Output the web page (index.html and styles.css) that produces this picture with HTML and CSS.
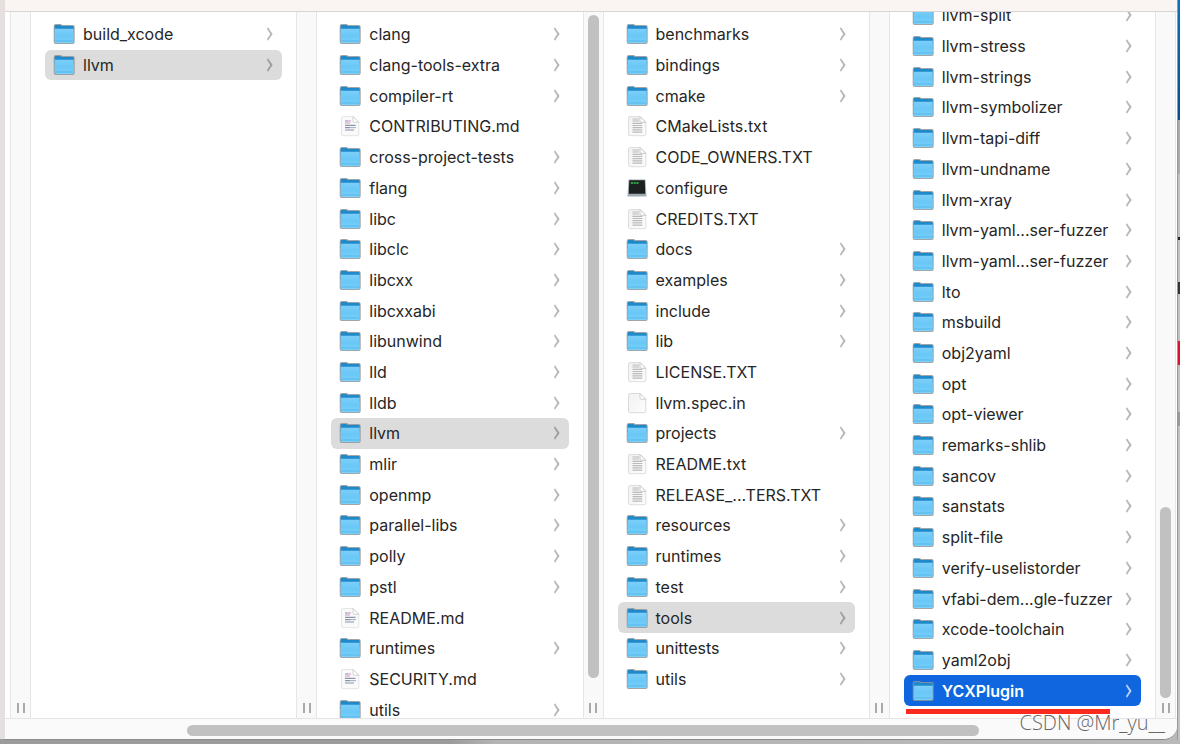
FILE: index.html
```html
<!DOCTYPE html>
<html lang="en">
<head>
<meta charset="utf-8">
<title>llvm – tools</title>
<link rel="stylesheet" href="styles.css">
</head>
<body class="desktop">
<svg class="sprite" aria-hidden="true">
  <defs>
    <linearGradient id="front" x1="0" y1="0" x2="0" y2="1"><stop offset="0" stop-color="#7ccff9"/><stop offset=".5" stop-color="#69c7f6"/><stop offset="1" stop-color="#7bd1fa"/></linearGradient>
    <linearGradient id="sheet" x1="0" y1="0" x2="1" y2="1"><stop offset="0" stop-color="#f1f1f1"/><stop offset="1" stop-color="#fdfdfd"/></linearGradient>
    <symbol id="folder" viewBox="0 0 22 22">
      <path d="M.7 3.200Q.7 1 2.800 1H7.200Q8.400 1 9.200 2H19.800Q21.700 2 21.700 4V19Q21.700 21 19.800 21H2.600Q.7 21 .7 19Z" fill="#8f9599" opacity=".85"/>
      <path d="M1.700 3.300Q1.700 1.900 2.900 1.900H6.900Q8 1.900 8.600 2.900H19.500Q20.700 2.900 20.700 4.200V10H1.700Z" fill="#2089ca"/>
      <path d="M1.700 5.800H20.700V18.500Q20.700 19.900 19.500 19.900H2.800Q1.700 19.900 1.700 18.500Z" fill="url(#front)"/>
      <path d="M2 18H20.400" stroke="#4fb0e3" stroke-width=".8"/>
    </symbol>
    <symbol id="blank" viewBox="0 0 22 22">
      <path d="M2.500 3.200Q2.500 1.500 4.200 1.500H14L19.800 7.300V19Q19.800 20.700 18.100 20.700H4.200Q2.500 20.700 2.500 19Z" fill="url(#sheet)" stroke="#d2d2d2" stroke-width=".8"/>
      <path d="M14 1.500V6Q14 7.300 15.300 7.300H19.800Z" fill="#fff" stroke="#c4c4c4" stroke-width=".8"/>
    </symbol>
    <symbol id="text" viewBox="0 0 22 22">
      <path d="M2.500 3.200Q2.500 1.500 4.200 1.500H14L19.800 7.300V19Q19.800 20.700 18.100 20.700H4.200Q2.500 20.700 2.500 19Z" fill="url(#sheet)" stroke="#d6d6d6" stroke-width=".8"/>
      <path d="M6.500 4H13M6.500 6H13M6.500 8.300H16.300M6.500 10.500H16.300M6.500 12.700H16.300M6.500 14.900H16.300M6.500 17.100H16.300" stroke="#b9b9b9" stroke-width="1.200"/>
      <path d="M14 1.500V6Q14 7.300 15.300 7.300H19.800Z" fill="#fff" stroke="#bdbdbd" stroke-width=".8"/>
    </symbol>
    <symbol id="markdown" viewBox="0 0 22 22">
      <path d="M2.500 3.200Q2.500 1.500 4.200 1.500H14L19.800 7.300V19Q19.800 20.700 18.100 20.700H4.200Q2.500 20.700 2.500 19Z" fill="#fafafa" stroke="#dedede" stroke-width=".8"/>
      <path d="M6 6H9" stroke="#83a7d8" stroke-width="1.200"/><path d="M9 6H12M6 8H11" stroke="#cf94bd" stroke-width="1.200"/>
      <path d="M6 10.300H16.500M6 12.600H11M6 15H15" stroke="#8b93ad" stroke-width="1.200"/><path d="M11 12.600H17" stroke="#a8b6c9" stroke-width="1.200"/>
      <path d="M14 1.500V6Q14 7.300 15.300 7.300H19.800Z" fill="#fff" stroke="#c6c6c6" stroke-width=".8"/>
    </symbol>
    <symbol id="exec" viewBox="0 0 22 22">
      <path d="M2.500 2.500H19.500L20.500 19.500H1.500Z" fill="#9eacb2"/>
      <path d="M3.300 3.300H18.800L19.200 16.700H2.800Z" fill="#1d2021"/>
      <path d="M4.800 6H13" stroke="#35c552" stroke-width="1.600" stroke-dasharray="2.200 .6"/>
    </symbol>
  </defs>
</svg>
<main class="window">
  <header class="titlebar"></header>
  <div class="browser">
    <div class="gutter"><div class="track"></div><span class="grip"></span></div>

    <section class="column">
      <ul class="list">
        <li><a class="row dir" href="#"><svg class="icon"><use href="#folder"/></svg>build_xcode</a></li>
        <li><a class="row dir selected" href="#"><svg class="icon"><use href="#folder"/></svg>llvm</a></li>
      </ul>
      <div class="gutter"><div class="track"></div><span class="grip"></span></div>
    </section>

    <section class="column">
      <ul class="list">
        <li><a class="row dir" href="#"><svg class="icon"><use href="#folder"/></svg>clang</a></li>
        <li><a class="row dir" href="#"><svg class="icon"><use href="#folder"/></svg>clang-tools-extra</a></li>
        <li><a class="row dir" href="#"><svg class="icon"><use href="#folder"/></svg>compiler-rt</a></li>
        <li><a class="row" href="#"><svg class="icon"><use href="#markdown"/></svg>CONTRIBUTING.md</a></li>
        <li><a class="row dir" href="#"><svg class="icon"><use href="#folder"/></svg>cross-project-tests</a></li>
        <li><a class="row dir" href="#"><svg class="icon"><use href="#folder"/></svg>flang</a></li>
        <li><a class="row dir" href="#"><svg class="icon"><use href="#folder"/></svg>libc</a></li>
        <li><a class="row dir" href="#"><svg class="icon"><use href="#folder"/></svg>libclc</a></li>
        <li><a class="row dir" href="#"><svg class="icon"><use href="#folder"/></svg>libcxx</a></li>
        <li><a class="row dir" href="#"><svg class="icon"><use href="#folder"/></svg>libcxxabi</a></li>
        <li><a class="row dir" href="#"><svg class="icon"><use href="#folder"/></svg>libunwind</a></li>
        <li><a class="row dir" href="#"><svg class="icon"><use href="#folder"/></svg>lld</a></li>
        <li><a class="row dir" href="#"><svg class="icon"><use href="#folder"/></svg>lldb</a></li>
        <li><a class="row dir selected" href="#"><svg class="icon"><use href="#folder"/></svg>llvm</a></li>
        <li><a class="row dir" href="#"><svg class="icon"><use href="#folder"/></svg>mlir</a></li>
        <li><a class="row dir" href="#"><svg class="icon"><use href="#folder"/></svg>openmp</a></li>
        <li><a class="row dir" href="#"><svg class="icon"><use href="#folder"/></svg>parallel-libs</a></li>
        <li><a class="row dir" href="#"><svg class="icon"><use href="#folder"/></svg>polly</a></li>
        <li><a class="row dir" href="#"><svg class="icon"><use href="#folder"/></svg>pstl</a></li>
        <li><a class="row" href="#"><svg class="icon"><use href="#markdown"/></svg>README.md</a></li>
        <li><a class="row dir" href="#"><svg class="icon"><use href="#folder"/></svg>runtimes</a></li>
        <li><a class="row" href="#"><svg class="icon"><use href="#markdown"/></svg>SECURITY.md</a></li>
        <li><a class="row dir" href="#"><svg class="icon"><use href="#folder"/></svg>utils</a></li>
      </ul>
      <div class="gutter"><div class="track"><div class="thumb" style="height:97%"></div></div><span class="grip"></span></div>
    </section>

    <section class="column">
      <ul class="list">
        <li><a class="row dir" href="#"><svg class="icon"><use href="#folder"/></svg>benchmarks</a></li>
        <li><a class="row dir" href="#"><svg class="icon"><use href="#folder"/></svg>bindings</a></li>
        <li><a class="row dir" href="#"><svg class="icon"><use href="#folder"/></svg>cmake</a></li>
        <li><a class="row" href="#"><svg class="icon"><use href="#text"/></svg>CMakeLists.txt</a></li>
        <li><a class="row" href="#"><svg class="icon"><use href="#text"/></svg>CODE_OWNERS.TXT</a></li>
        <li><a class="row" href="#"><svg class="icon"><use href="#exec"/></svg>configure</a></li>
        <li><a class="row" href="#"><svg class="icon"><use href="#text"/></svg>CREDITS.TXT</a></li>
        <li><a class="row dir" href="#"><svg class="icon"><use href="#folder"/></svg>docs</a></li>
        <li><a class="row dir" href="#"><svg class="icon"><use href="#folder"/></svg>examples</a></li>
        <li><a class="row dir" href="#"><svg class="icon"><use href="#folder"/></svg>include</a></li>
        <li><a class="row dir" href="#"><svg class="icon"><use href="#folder"/></svg>lib</a></li>
        <li><a class="row" href="#"><svg class="icon"><use href="#text"/></svg>LICENSE.TXT</a></li>
        <li><a class="row" href="#"><svg class="icon"><use href="#blank"/></svg>llvm.spec.in</a></li>
        <li><a class="row dir" href="#"><svg class="icon"><use href="#folder"/></svg>projects</a></li>
        <li><a class="row" href="#"><svg class="icon"><use href="#text"/></svg>README.txt</a></li>
        <li><a class="row" href="#"><svg class="icon"><use href="#text"/></svg>RELEASE_...TERS.TXT</a></li>
        <li><a class="row dir" href="#"><svg class="icon"><use href="#folder"/></svg>resources</a></li>
        <li><a class="row dir" href="#"><svg class="icon"><use href="#folder"/></svg>runtimes</a></li>
        <li><a class="row dir" href="#"><svg class="icon"><use href="#folder"/></svg>test</a></li>
        <li><a class="row dir selected" href="#"><svg class="icon"><use href="#folder"/></svg>tools</a></li>
        <li><a class="row dir" href="#"><svg class="icon"><use href="#folder"/></svg>unittests</a></li>
        <li><a class="row dir" href="#"><svg class="icon"><use href="#folder"/></svg>utils</a></li>
      </ul>
      <div class="gutter"><div class="track"></div><span class="grip"></span></div>
    </section>

    <section class="column">
      <ul class="list scrolled">
        <li><a class="row dir" href="#"><svg class="icon"><use href="#folder"/></svg>llvm-split</a></li>
        <li><a class="row dir" href="#"><svg class="icon"><use href="#folder"/></svg>llvm-stress</a></li>
        <li><a class="row dir" href="#"><svg class="icon"><use href="#folder"/></svg>llvm-strings</a></li>
        <li><a class="row dir" href="#"><svg class="icon"><use href="#folder"/></svg>llvm-symbolizer</a></li>
        <li><a class="row dir" href="#"><svg class="icon"><use href="#folder"/></svg>llvm-tapi-diff</a></li>
        <li><a class="row dir" href="#"><svg class="icon"><use href="#folder"/></svg>llvm-undname</a></li>
        <li><a class="row dir" href="#"><svg class="icon"><use href="#folder"/></svg>llvm-xray</a></li>
        <li><a class="row dir" href="#"><svg class="icon"><use href="#folder"/></svg>llvm-yaml...ser-fuzzer</a></li>
        <li><a class="row dir" href="#"><svg class="icon"><use href="#folder"/></svg>llvm-yaml...ser-fuzzer</a></li>
        <li><a class="row dir" href="#"><svg class="icon"><use href="#folder"/></svg>lto</a></li>
        <li><a class="row dir" href="#"><svg class="icon"><use href="#folder"/></svg>msbuild</a></li>
        <li><a class="row dir" href="#"><svg class="icon"><use href="#folder"/></svg>obj2yaml</a></li>
        <li><a class="row dir" href="#"><svg class="icon"><use href="#folder"/></svg>opt</a></li>
        <li><a class="row dir" href="#"><svg class="icon"><use href="#folder"/></svg>opt-viewer</a></li>
        <li><a class="row dir" href="#"><svg class="icon"><use href="#folder"/></svg>remarks-shlib</a></li>
        <li><a class="row dir" href="#"><svg class="icon"><use href="#folder"/></svg>sancov</a></li>
        <li><a class="row dir" href="#"><svg class="icon"><use href="#folder"/></svg>sanstats</a></li>
        <li><a class="row dir" href="#"><svg class="icon"><use href="#folder"/></svg>split-file</a></li>
        <li><a class="row dir" href="#"><svg class="icon"><use href="#folder"/></svg>verify-uselistorder</a></li>
        <li><a class="row dir" href="#"><svg class="icon"><use href="#folder"/></svg>vfabi-dem...gle-fuzzer</a></li>
        <li><a class="row dir" href="#"><svg class="icon"><use href="#folder"/></svg>xcode-toolchain</a></li>
        <li><a class="row dir" href="#"><svg class="icon"><use href="#folder"/></svg>yaml2obj</a></li>
        <li class="marked"><a class="row dir active" href="#"><svg class="icon"><use href="#folder"/></svg>YCXPlugin</a></li>
      </ul>
      <div class="gutter"><div class="track end"><div class="thumb" style="height:28%"></div></div><span class="grip"></span></div>
    </section>
  </div>
  <footer class="hscroll"><div class="hthumb"></div></footer>
</main>
<div class="backdrop"></div>
<div class="watermark">CSDN @Mr_yu__</div>
</body>
</html>
```
FILE: styles.css
```css
* { box-sizing: border-box; }

.desktop {
  position: relative;
  display: grid;
  grid-template-columns: 1fr 3px;
  height: 100vh;
  margin: 0;
  padding: 0 0 4px 5px;
  overflow: hidden;
  background:
    linear-gradient(90deg, #e6dfdf, #e6dfdf) 0 0 / 5px calc(100% - 5px) no-repeat,
    linear-gradient(90deg, #9b9b9b 0 38%, #b4b4b4 42%, #b9b9b9 100%);
  color: #262626;
  font-family: Inter, "Liberation Sans", sans-serif;
  font-size: 16px;
  line-height: 20px;
}

.sprite { position: absolute; width: 0; height: 0; }

.window {
  display: flex;
  flex-direction: column;
  min-width: 0;
  min-height: 0;
  overflow: hidden;
  background: #fff;
  border-bottom: 1px solid #8a8a8a;
  border-bottom-right-radius: 14px;
}

.titlebar {
  flex: none;
  height: 12px;
  background: #faf4f3;
  border-bottom: 1px solid #d9d5d5;
}

.browser {
  display: flex;
  flex: 1;
  min-height: 0;
  padding: 0 1px 0 5px;
  overflow: hidden;
}

.column {
  display: flex;
  flex: 1;
  min-width: 0;
}

.list {
  display: grid;
  flex: 1;
  grid-template-rows: repeat(23, 1fr);
  height: 100%;
  min-width: 0;
  margin: 7px 0 0;
  padding: 0 14px;
  list-style: none;
}

.list.scrolled { margin-top: -12px; }

.row {
  display: flex;
  align-items: center;
  gap: 8px;
  height: 100%;
  padding: 0 10px 0 8px;
  border-radius: 6px;
  color: inherit;
  text-decoration: none;
  white-space: nowrap;
}

.icon {
  flex: none;
  width: 22px;
  height: 22px;
}

.dir::after {
  content: "";
  flex: none;
  width: 6px;
  height: 6px;
  margin-left: auto;
  border: solid #b8b8b8;
  border-width: 2px 2px 0 0;
  transform: rotate(45deg) skew(12deg, 12deg);
}

.selected { background: #dcdcdc; }

.selected::after { border-color: #9e9e9e; }

.active {
  background: #1066de;
  color: #fff;
  font-weight: 600;
}

.active::after { border-color: #b5d2fb; }

.marked { position: relative; }

.marked::after {
  content: "";
  position: absolute;
  top: 100%;
  left: 2px;
  width: 204px;
  height: 5px;
  margin-top: 3px;
  background: #fb2a1f;
}

.gutter {
  display: flex;
  flex: none;
  flex-direction: column;
  gap: 5px;
  align-items: center;
  width: 21px;
  padding: 3px 0 5px;
  background: #f9f9f9;
  border: solid #e6e6e6;
  border-width: 0 1px;
}

.track {
  display: flex;
  flex: 1;
  flex-direction: column;
}

.track.end { justify-content: flex-end; }

.thumb {
  width: 11px;
  background: #c1c1c1;
  border-radius: 6px;
}

.grip {
  width: 8px;
  height: 10px;
  border: solid #a9a9a9;
  border-width: 0 2px;
}

.hscroll {
  flex: none;
  height: 21px;
  padding: 6px 198px 4px 182px;
  background: #fafafa;
  border-top: 1px solid #e4e4e4;
}

.hthumb {
  height: 11px;
  background: #c1c1c1;
  border-radius: 6px;
}

/* Slice of the windows behind, visible past the right edge. */
.backdrop {
  border-left: 1px solid #999;
  background: linear-gradient(
    #0b72bd 0, #0a5fa5 60px, #0b4d8d 120px,
    #aaa 120px 174px, #c2c2c2 174px 237px,
    #222 237px 240px, #c2c2c2 240px 282px,
    #333 282px 294px, #c2c2c2 294px 341px,
    #d41430 341px 365px, #c2c2c2 365px 412px,
    #999 412px 426px, #c2c2c2 426px);
}

.watermark {
  position: absolute;
  right: 15px;
  bottom: 7px;
  color: #666;
  font-family: "Open Sans", "Noto Sans", sans-serif;
  font-size: 20px;
  font-weight: 300;
  line-height: 28px;
  text-shadow: 0 0 1px #fff;
}
```
